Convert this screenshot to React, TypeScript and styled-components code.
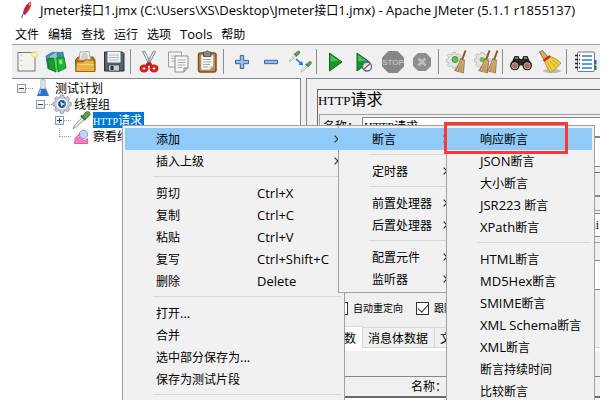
import React from "react";
import styled, { createGlobalStyle, css } from "styled-components";

const UI = `"Noto Sans CJK SC", "Noto Sans", sans-serif`;
const LINE = "#828790";

const Global = createGlobalStyle`
  * { box-sizing: border-box; }
  body { margin: 0; background: #fff; color: #000; font: 12px/16px ${UI}; overflow: hidden; }
  button { font: inherit; color: inherit; border: 0; padding: 0; background: none; }
  input { font: inherit; border-radius: 0; }
`;

const Frame = styled.div`
  position: relative;
  height: 100vh;
  margin: 0 14px 0 12px;
  overflow: hidden;
  display: flex;
  flex-direction: column;
`;
const Latin = styled.span<{ $serif?: number }>`
  font-family: ${(p) => (p.$serif ? `"Liberation Serif", serif` : `"Open Sans", "Noto Sans", sans-serif`)};
  font-size: ${(p) => p.$serif || 13}px;
`;

/* Latin runs are set in their own face beside the Chinese text. */
function Mixed({ text, serif }: { text: string; serif?: number }) {
  return (
    <>
      {text.split(/([\x20-\x7e]+)/).map((run, i) =>
        i % 2 ? <Latin key={i} $serif={serif}>{run}</Latin> : run
      )}
    </>
  );
}

const TitleBar = styled.header`
  display: flex;
  align-items: center;
  gap: 8px;
  height: 20px;
  padding-left: 8px;
  white-space: pre;
`;
const MenuBar = styled.nav`
  display: flex;
  align-items: center;
  gap: 9px;
  height: 24px;
  padding: 4px 0 0 3px;
`;
const ToolBar = styled.div`
  display: flex;
  align-items: center;
  height: 34px;
  flex: none;
  background: #f0f0f0;
  border-top: 1px solid #a0a0a0;
`;
const Tool = styled.button`
  width: 29px;
  height: 32px;
  display: grid;
  place-items: center;
  flex: none;
`;
const ToolGap = styled.i`
  width: 1px;
  height: 25px;
  margin: 0 3px 0 2px;
  background: #8c8c8c;
  flex: none;
`;
const Body = styled.main`
  flex: 1;
  min-height: 0;
  display: grid;
  grid-template-columns: 289px 1fr;
  gap: 5px;
  background: #f0f0f0;
`;
const TreePane = styled.section`
  background: #fff;
  border-top: 1px solid ${LINE};
  border-right: 1px solid ${LINE};
  padding-top: 1px;
`;
const TreeRow = styled.div<{ $depth: number }>`
  display: flex;
  align-items: center;
  height: 16px;
  padding-left: ${(p) => 5 + p.$depth * 19}px;
  svg { flex: none; }
`;
const Toggle = styled.button`
  width: 9px;
  height: 9px;
  flex: none;
  border: 1px solid #8f9bab;
  background: linear-gradient(#fff, #e8e8e8);
  display: grid;
  place-items: center;
`;
const Dots = styled.i<{ $corner?: boolean }>`
  width: 7px;
  border-top: 1px dotted #999;
  ${(p) => p.$corner && css`
    width: 12px;
    height: 9px;
    margin: -8px 0 0 4px;
    border-top: 0;
    border-left: 1px dotted #999;
    border-bottom: 1px dotted #999;
  `}
`;
const NodeName = styled.span<{ $selected?: boolean }>`
  margin-left: 2px;
  height: 16px;
  line-height: 16px;
  white-space: nowrap;
  ${(p) => p.$selected && css`
    background: #0078d7;
    color: #fff;
    padding-right: 2px;
  `}
`;

const Pane = styled.section`
  min-width: 0;
  border-top: 1px solid ${LINE};
  border-left: 1px solid ${LINE};
  padding: 10px 0 0 10px;
  display: flex;
`;
const Form = styled.form`
  flex: 1;
  min-width: 0;
  border-top: 1px solid #696969;
  border-left: 1px solid #696969;
  display: flex;
  flex-direction: column;
`;
const Heading = styled.h1`
  margin: 0;
  font-size: 16px;
  font-weight: 400;
  line-height: 17px;
  height: 24px;
`;
const Group = styled.div<{ $dark?: boolean }>`
  margin-left: 1px;
  border-top: 1px solid ${(p) => (p.$dark ? "#696969" : "#a0a0a0")};
  border-left: 1px solid #a0a0a0;
  padding: 2px 0 5px 3px;
`;
const Field = styled.label<{ $h: number }>`
  display: grid;
  grid-template-columns: 39px 1fr;
  height: ${(p) => p.$h}px;
  line-height: 18px;
  white-space: nowrap;
`;
const Spacer = styled.div<{ $h: number }>`
  height: ${(p) => p.$h}px;
`;
const TextBox = styled.input<{ $end?: boolean }>`
  width: 100%;
  min-width: 0;
  border: 1px solid ${LINE};
  border-right: 0;
  background: #fff;
  padding: 0 1px;
  font: 12px/16px "Liberation Serif", "Noto Sans CJK SC", serif;
  text-align: ${(p) => (p.$end ? "right" : "left")};
`;
const Checks = styled.div`
  display: flex;
  align-items: center;
  gap: 13px;
  height: 26px;
  margin-bottom: 5px;
  padding-left: 17px;
  font-size: 10px;
  white-space: nowrap;
  overflow: hidden;
`;
const Check = styled.label`
  display: flex;
  align-items: center;
  gap: 5px;
  flex: none;
`;
const Box = styled.input.attrs({ type: "checkbox" })`
  appearance: none;
  margin: 0;
  width: 13px;
  height: 13px;
  border: 1px solid #333;
  background: #fff;
  &:checked {
    display: grid;
    place-items: center;
  }
  &:checked::after {
    content: "";
    width: 9px;
    height: 5px;
    margin-top: -3px;
    border-left: 1px solid #333;
    border-bottom: 1px solid #333;
    transform: rotate(-48deg);
  }
`;
const Tabs = styled.div`
  display: flex;
  align-items: flex-end;
  height: 22px;
  border-bottom: 1px solid #d9d9d9;
`;
const Tab = styled.button<{ $on?: boolean }>`
  height: ${(p) => (p.$on ? 22 : 20)}px;
  margin-bottom: ${(p) => (p.$on ? -1 : 0)}px;
  padding: 0 6px 0 ${(p) => (p.$on ? 13 : 5)}px;
  border: 1px solid #d9d9d9;
  border-bottom: 0;
  border-left-width: ${(p) => (p.$on ? 1 : 0)}px;
  background: ${(p) => (p.$on ? "#fff" : "#f0f0f0")};
  white-space: nowrap;
  flex: none;
`;
const TabPanel = styled.div`
  flex: 1;
  border-top: 3px solid #fff;
  padding-top: 25px;
`;
const Grid = styled.table`
  width: 100%;
  height: 100%;
  border-collapse: collapse;
  border-top: 1px solid ${LINE};
  background: #fff;
  th {
    height: 20px;
    padding: 0 0 0 93px;
    text-align: left;
    font-weight: 400;
    background: #f0f0f0;
    border-bottom: 2px solid #696969;
  }
`;

const Menu = styled.div<{ $x: number; $w: number; $tall?: boolean }>`
  position: absolute;
  top: 125px;
  left: ${(p) => p.$x}px;
  width: ${(p) => p.$w}px;
  min-height: ${(p) => (p.$tall ? "calc(100vh - 120px)" : "0")};
  padding: 2px;
  border: 1px solid #a0a0a0;
  background: #f1f1f1;
  display: flex;
  flex-direction: column;
`;
const Item = styled.button<{ $on?: boolean; $bleed?: boolean }>`
  display: grid;
  grid-template-columns: minmax(0, 101px) 1fr auto;
  align-items: center;
  height: 22px;
  padding: 0 3px 1px 31px;
  text-align: left;
  white-space: nowrap;
  flex: none;
  ${(p) => p.$on && css`background: #91c9f7;`}
  ${(p) => p.$bleed && css`margin-left: -3px; padding-left: 34px;`}
`;
const Rule = styled.hr`
  width: auto;
  height: 1px;
  flex: none;
  margin: 4px 1px 5px 28px;
  border: 0;
  background: #d7d7d7;
`;
const Marker = styled.div`
  position: absolute;
  top: 122px;
  left: 432px;
  width: 124px;
  height: 32px;
  border: 3px solid #fa3838;
  pointer-events: none;
`;

type Entry = { label: string; keys?: string; sub?: boolean; on?: boolean } | null;
const EDIT: Entry[] = [
  { label: "添加", sub: true, on: true }, { label: "插入上级", sub: true }, null,
  { label: "剪切", keys: "Ctrl+X" }, { label: "复制", keys: "Ctrl+C" },
  { label: "粘贴", keys: "Ctrl+V" }, { label: "复写", keys: "Ctrl+Shift+C" },
  { label: "删除", keys: "Delete" }, null,
  { label: "打开..." }, { label: "合并" }, { label: "选中部分保存为..." },
  { label: "保存为测试片段" }, null,
];
const ADD: Entry[] = [
  { label: "断言", sub: true, on: true }, null, { label: "定时器", sub: true }, null,
  { label: "前置处理器", sub: true }, { label: "后置处理器", sub: true }, null,
  { label: "配置元件", sub: true }, { label: "监听器", sub: true },
];
const ASSERT: Entry[] = [
  { label: "响应断言", on: true }, { label: "JSON断言" }, { label: "大小断言" },
  { label: "JSR223 断言" }, { label: "XPath断言" }, null,
  { label: "HTML断言" }, { label: "MD5Hex断言" }, { label: "SMIME断言" },
  { label: "XML Schema断言" }, { label: "XML断言" }, { label: "断言持续时间" }, { label: "比较断言" },
];

function Popup({ items, x, w, tall, bleed }: { items: Entry[]; x: number; w: number; tall?: boolean; bleed?: boolean }) {
  return (
    <Menu role="menu" $x={x} $w={w} $tall={tall}>
      {items.map((it, i) =>
        it ? (
          <Item key={i} role="menuitem" $on={it.on} $bleed={bleed && it.on}>
            <span><Mixed text={it.label} /></span>
            <span>{it.keys && <Mixed text={it.keys} />}</span>
            {it.sub && (
              <svg width="5" height="8" viewBox="0 0 5 8" fill="none" stroke="#333" strokeWidth="1.2">
                <path d="M.6.6 4 4 .6 7.4" />
              </svg>
            )}
          </Item>
        ) : <Rule key={i} />
      )}
    </Menu>
  );
}

function Ico({ children, size = 24 }: { children: React.ReactNode; size?: number }) {
  return <svg width={size} height={size} viewBox="0 0 24 24" fill="none" aria-hidden="true">{children}</svg>;
}
const Gear = ({ fill = "#e4e6e6", stroke = "#a9adad" }) => (
  <path d="M9.6 2h3.8l.5 2.6 2 .8 2.2-1.5 2.6 2.6-1.5 2.2.8 2 2.6.5v3.6l-2.6.5-.8 2 1.5 2.2-2.6 2.6-2.2-1.5-2 .8-.5 2.6H9.6l-.5-2.6-2-.8-2.2 1.5-2.6-2.6 1.5-2.2-.8-2L.5 14.800v-3.6l2.500-.5.8-2-1.500-2.200 2.600-2.600 2.200 1.500 2-.8z" fill={fill} stroke={stroke} />
);
const Pipette = ({ s = 1 }) => (
  <g transform={`scale(${s})`}>
    <path d="M2.500 22.500 4 18.500 13.500 9l2.500 2.500-10 9z" fill="#dfe5e5" stroke="#7d8989" />
    <path d="m5 19 9-8.500" stroke="#fff" strokeWidth="1.200" />
    <path d="m12 6.500 5.500 5.500" stroke="#3a6a36" strokeWidth="2.500" />
    <path d="M14 8.500c1-4 4-7 7-6.500 2.500.8 2.500 3.500.500 5.500-1.500 1.500-3 2.500-5 3.500z" fill="#5ea24b" stroke="#33692b" />
  </g>
);
const Bristles = () => (
  <>
    <path d="M20.500.5 17 10" stroke="#8a5a2e" strokeWidth="2" />
    <path d="M15.500 8.500 19.500 10 18.500 23l-9-2.500c3-3 5-7 6-12z" fill="#b98d58" stroke="#8b6237" strokeWidth=".7" />
    <path d="M16.500 10 12 21M17.500 10.500 14.500 22M18.500 11 17 22.500" stroke="#dcbd8c" strokeWidth=".8" />
  </>
);

const ICONS: Record<string, React.ReactNode> = {
  新建: (<>
    <rect x="3" y="2.500" width="17" height="18.500" fill="#f3f3f1" stroke="#777" />
    <path d="M6.500 5v14" stroke="#aaa" strokeDasharray="1 4" />
    <circle cx="19.500" cy="4.500" r="3.500" fill="#f8e36a" opacity=".8" /><circle cx="19.500" cy="4.500" r="1.800" fill="#fffce0" />
  </>),
  模板: (<>
    <path d="M2 6 9 2l4 2-2 14-7 1z" fill="#4aa0b8" stroke="#226b82" strokeWidth=".8" />
    <path d="m5 6 7-4 5 1-1 4-9 3z" fill="#8cc7d5" stroke="#226b82" strokeWidth=".6" />
    <path d="m13 3 6-1 1 7-6 2z" fill="#3c91aa" stroke="#226b82" strokeWidth=".6" />
    <path d="m3 9 7-1 2 14-7-3z" fill="#1e9634" stroke="#086b1b" strokeWidth=".8" />
    <path d="m10 8 4 1v10l-2 3z" fill="#55d552" />
    <path d="m13 8 7-1 2 11-8 4z" fill="#24b135" stroke="#087b1b" strokeWidth=".8" />
    <path d="m15 10 3-.5.500 4-3 1z" fill="#88ec72" />
  </>),
  打开: (<>
    <path d="M2.500 10 5 7h15l2 3v10h-19z" fill="#b87b1b" stroke="#80500b" />
    <path d="m7 2 9-.5 2 8.500H6z" fill="#f5f5f2" stroke="#999" strokeWidth=".8" />
    <path d="M9 4h5M8.500 6h7M8 8h7" stroke="#aaa" />
    <path d="M3.500 12h7l1-2h9.500l1 11.500H2.500z" fill="#edb347" stroke="#9b6713" />
    <path d="M4 14.500h17" stroke="#f9d27b" />
  </>),
  保存: (<>
    <path d="M2.500 2h18l1.500 1.500V21H2.500z" fill="#536170" stroke="#27323d" />
    <path d="M5.500 2h13v10.500h-13z" fill="#f2f4f5" /><path d="M7 5h10M7 7.500h10M7 10h10" stroke="#adb7bf" />
    <path d="M6.500 15h11v6h-11z" fill="#c9cdd0" stroke="#333" strokeWidth=".7" /><path d="M8.500 16h3v4h-3z" fill="#252d34" />
  </>),
  剪切: (<>
    <path d="m5.500 1.500 2-.5 7.500 14-2 1.500zM18.500 1.500l-2-.5-7.500 14 2 1.500z" fill="#e7e9e9" stroke="#7d8585" strokeWidth=".9" />
    <ellipse cx="7" cy="18.500" rx="3" ry="2.600" stroke="#d42222" strokeWidth="3" /><ellipse cx="17" cy="18.500" rx="3" ry="2.600" stroke="#d42222" strokeWidth="3" />
    <path d="m9.500 15.500 2.500-2.500 2.500 2.500" stroke="#c81919" strokeWidth="2.500" />
  </>),
  复制: (<>
    <path d="M2.500 2h13v15h-13z" fill="#f4f4f3" stroke="#9b9e9b" /><path d="M5 6h8M5 8.500h8M5 11h8" stroke="#bbb" />
    <path d="M9 6h13v12l-4 4H9z" fill="#f8f8f7" stroke="#888c88" /><path d="M11.500 10h8M11.500 12.500h8M11.500 15h8M11.500 17.500h5" stroke="#aaa" /><path d="M18 22v-4h4" fill="#ccc" stroke="#888" />
  </>),
  粘贴: (<>
    <rect x="3.500" y="3" width="17.500" height="19" rx="2" fill="#c18a3c" stroke="#7c511b" strokeWidth="1.500" />
    <path d="M6 5h12.500v11l-4 4H6z" fill="#f5f5f2" stroke="#999" strokeWidth=".6" /><path d="M8 9.500h8M8 12h8M8 14.500h7M8 17h5" stroke="#aaa" />
    <path d="M14.500 20v-4h4" fill="#ccc" /><path d="M8.500 2h2a2 2 0 0 1 3.500 0h2v4.500H8.500z" fill="#858983" stroke="#444" strokeWidth=".8" />
  </>),
  展开: <path d="M10.300 5.500h3.400v4.800h4.800v3.400h-4.800v4.800h-3.400v-4.800H5.500v-3.400h4.800z" fill="#9dbce0" stroke="#34639f" />,
  折叠: <path d="M5.500 10.300h13v3.400h-13z" fill="#9dbce0" stroke="#34639f" />,
  切换: (<>
    <Pipette s={0.52} /><g transform="translate(11.500 10.500)"><Pipette s={0.52} /></g>
    <path d="m8 9 5 4.500" stroke="#1c6fe0" strokeWidth="1.600" /><path d="m15 15.500-4.500-1 3.500-3.500z" fill="#1c6fe0" />
  </>),
  启动: (<><path d="M6.500 3v18L19 12z" fill="#16952a" stroke="#0a6a18" /><path d="M7.500 5v6.500L16 11z" fill="#53bd59" /></>),
  不停顿启动: (<>
    <path d="M5 3v18l12.500-9z" fill="#16952a" stroke="#0a6a18" /><path d="M6 5v6.500l8.500-.5z" fill="#53bd59" />
    <circle cx="15" cy="16.500" r="4.500" fill="#eef3fa" fillOpacity=".85" stroke="#3d6dac" strokeWidth="1.300" /><path d="m11.500 19.500 7-6.500" stroke="#dc3b2e" strokeWidth="1.500" />
  </>),
  停止: (<>
    <path d="M7.500 1h9l6.500 6.500v9L16.500 23h-9L1 16.500v-9z" fill="#878787" />
    <text x="12" y="15" textAnchor="middle" fontFamily="Liberation Sans, sans-serif" fontWeight="700" fontSize="8" fill="#bdbdbd">STOP</text>
  </>),
  关闭: (<><path d="M8 3h8l5 5v8l-5 5H8l-5-5V8z" fill="#8e8e8e" /><path d="m8.500 8.500 7 7m0-7-7 7" stroke="#bebebe" strokeWidth="2.500" /></>),
  清除: (<><g transform="translate(1 1) scale(.72)"><Gear /></g><circle cx="10" cy="9.500" r="3" fill="#72bd4b" stroke="#4b9230" /><Bristles /></>),
  清除全部: (<><g transform="translate(0 1) scale(.72)"><Gear /></g><circle cx="8" cy="9.500" r="2.500" fill="#72bd4b" /><g transform="translate(-5 0)"><Bristles /></g><g transform="translate(3 0)"><Bristles /></g></>),
  查找: (<>
    <path d="M5.500 6h4l1.500 3h2l1.500-3h4l4 9-6 4-3-3.500h-3L7.500 19l-6-4z" fill="#292929" />
    <circle cx="5.800" cy="15.500" r="4.800" fill="#191919" /><circle cx="18.200" cy="15.500" r="4.800" fill="#191919" />
    <circle cx="5.800" cy="15.800" r="3.200" fill="#a6705c" stroke="#ddd" strokeWidth=".6" /><circle cx="18.200" cy="15.800" r="3.200" fill="#a6705c" stroke="#ddd" strokeWidth=".6" />
    <path d="M6 8h3m6 0h3" stroke="#8f8f8f" strokeWidth="1.500" />
  </>),
  重置查找: (<>
    <ellipse cx="14" cy="21" rx="9" ry="2.200" fill="#bdbdb4" />
    <path d="m1.500 2 3-1.500 6 7-4 3z" fill="#d9ad5e" stroke="#875e20" strokeWidth=".8" />
    <path d="M6.500 10.500 12 6.500c4 1 8 4 11 6.500-3 4-6 7-10.500 9.500-3-3.500-5-8-6-12z" fill="#ecd13e" stroke="#a78716" strokeWidth=".8" />
    <path d="m9.500 12.500 4.500 8m-2-9.500 6 6.500m-4-8 6 5" stroke="#b89c23" strokeWidth=".8" />
    <path d="m5.500 11 6.500-5" stroke="#d52524" strokeWidth="2.500" />
  </>),
  帮助: (<>
    <rect x="4.500" y="2" width="17" height="19.500" rx="1" fill="#fdfdfd" stroke="#777" />
    <path d="M9 6h10M9 10h10M9 14h10M9 18h10" stroke="#277edc" strokeWidth="1.500" />
    <path d="M2 5.500h5M2 9.500h5M2 13.500h5M2 17.500h5" stroke="#222" strokeWidth="1.500" strokeDasharray="3 1" />
    <path d="M22.500 10v4.500" stroke="#1464d2" strokeWidth="2" /><path d="M22.500 15.500V20" stroke="#178828" strokeWidth="2" />
  </>),
};
const TOOLS = [["新建", "模板", "打开", "保存"], ["剪切", "复制", "粘贴"], ["展开", "折叠", "切换"], ["启动", "不停顿启动", "停止", "关闭"], ["清除", "清除全部"], ["查找", "重置查找"], ["帮助"]];

const NODES = [
  { name: "测试计划", depth: 0, mark: "-", icon: (<>
    <path d="M9.500 2h5v8l4.500 11H5l4.500-11z" fill="#dce8ef" stroke="#a5b4bf" /><path d="m8.500 13-3.500 8.500h14L15.500 13z" fill="#2e72c6" /><path d="m9.500 14.500-2 4.500" stroke="#8fc0f2" strokeWidth="2" />
  </>) },
  { name: "线程组", depth: 1, mark: "-", icon: (<>
    <g transform="translate(.5 -.8)"><Gear fill="#c4cad2" stroke="#8d949e" /></g><circle cx="12" cy="12" r="6.500" fill="#fff" /><circle cx="12" cy="12" r="5" fill="#4c79ba" /><path d="M14.500 9a4 4 0 1 0 0 6" fill="#294f90" /><path d="m10 9 5 3-4 3" fill="#d5e4f8" />
  </>) },
  { name: "HTTP请求", depth: 2, mark: "+", icon: <Pipette /> },
  { name: "察看结果树", depth: 2, mark: "", icon: (<>
    <rect x="4" y="3" width="16" height="18" fill="#faf5fa" /><path d="M4 19c4-7 7-7 9-4s4 3 7 0v6H4z" fill="#ee83bd" stroke="#ce4d94" /><circle cx="15" cy="10" r="5" fill="#c5d4f3" stroke="#7790c9" /><path d="m4 16 7-7" stroke="#e05d9f" strokeWidth="1.500" />
  </>) },
];

export default function App() {
  return (
    <Frame>
      <Global />
      <TitleBar>
        <svg width="12" height="18" viewBox="0 0 12 18" aria-hidden="true">
          <path d="M11 1C7 1 3 8 3 13l2 1c4-4 7-9 6-13z" fill="#cf2840" /><path d="M10 2C7 5 5 9 4 13" stroke="#7b2b82" fill="none" /><path d="m3 13-1.500 4" stroke="#555" />
          <path d="M9 2.500 10.500 4" stroke="#f0a03c" strokeWidth="2" />
        </svg>
        <span><Mixed text="Jmeter接口1.jmx (C:\Users\XS\Desktop\Jmeter接口1.jmx) - Apache JMeter (5.1.1 r1855137)" /></span>
      </TitleBar>
      <MenuBar>
        {["文件", "编辑", "查找", "运行", "选项", "Tools", "帮助"].map((m) => <button key={m}><Mixed text={m} /></button>)}
      </MenuBar>
      <ToolBar role="toolbar">
        {TOOLS.map((group, g) => (
          <React.Fragment key={g}>
            {g > 0 && <ToolGap />}
            {group.map((t) => <Tool key={t} aria-label={t}><Ico>{ICONS[t]}</Ico></Tool>)}
          </React.Fragment>
        ))}
      </ToolBar>
      <Body>
        <TreePane>
          {NODES.map((n) => (
            <TreeRow key={n.name} $depth={n.depth}>
              {n.mark ? (
                <>
                  <Toggle aria-label={n.name}>
                    <svg width="5" height="5" viewBox="0 0 5 5" stroke="#23407a"><path d={n.mark === "+" ? "M0 2.500h5M2.500 0v5" : "M0 2.500h5"} /></svg>
                  </Toggle>
                  <Dots />
                </>
              ) : <Dots $corner />}
              <Ico size={20}>{n.icon}</Ico>
              <NodeName $selected={n.mark === "+"}><Mixed text={n.name} serif={10} /></NodeName>
            </TreeRow>
          ))}
        </TreePane>
        <Pane>
          <Form>
            <Heading><Mixed text="HTTP请求" serif={13} /></Heading>
            <Group>
              <Field $h={20}>名称：<TextBox defaultValue="HTTP请求" /></Field>
              <Field $h={30}>注释：<TextBox /></Field>
            </Group>
            <Group $dark>
              <Field $h={20}>服务器</Field>
              <TextBox as="div" />
              <Spacer $h={8} />
            </Group>
            <Group>
              <Field $h={24}>路径：<TextBox $end defaultValue="ui" /></Field>
            </Group>
            <Group>
              <Spacer $h={15} />
              <Field $h={30}>端口：<TextBox /></Field>
            </Group>
            <Checks>
              <Check><Box />自动重定向</Check>
              <Check><Box defaultChecked />跟随</Check>
            </Checks>
            <Tabs role="tablist">
              <Tab type="button" role="tab" $on>参数</Tab>
              <Tab type="button" role="tab">消息体数据</Tab>
              <Tab type="button" role="tab">文</Tab>
            </Tabs>
            <TabPanel>
              <Grid>
                <thead><tr><th>名称：</th></tr></thead>
                <tbody><tr><td /></tr></tbody>
              </Grid>
            </TabPanel>
          </Form>
        </Pane>
      </Body>
      <Popup items={EDIT} x={110} w={223} tall />
      <Popup items={ADD} x={326} w={116} bleed />
      <Popup items={ASSERT} x={434} w={149} tall bleed />
      <Marker />
    </Frame>
  );
}
